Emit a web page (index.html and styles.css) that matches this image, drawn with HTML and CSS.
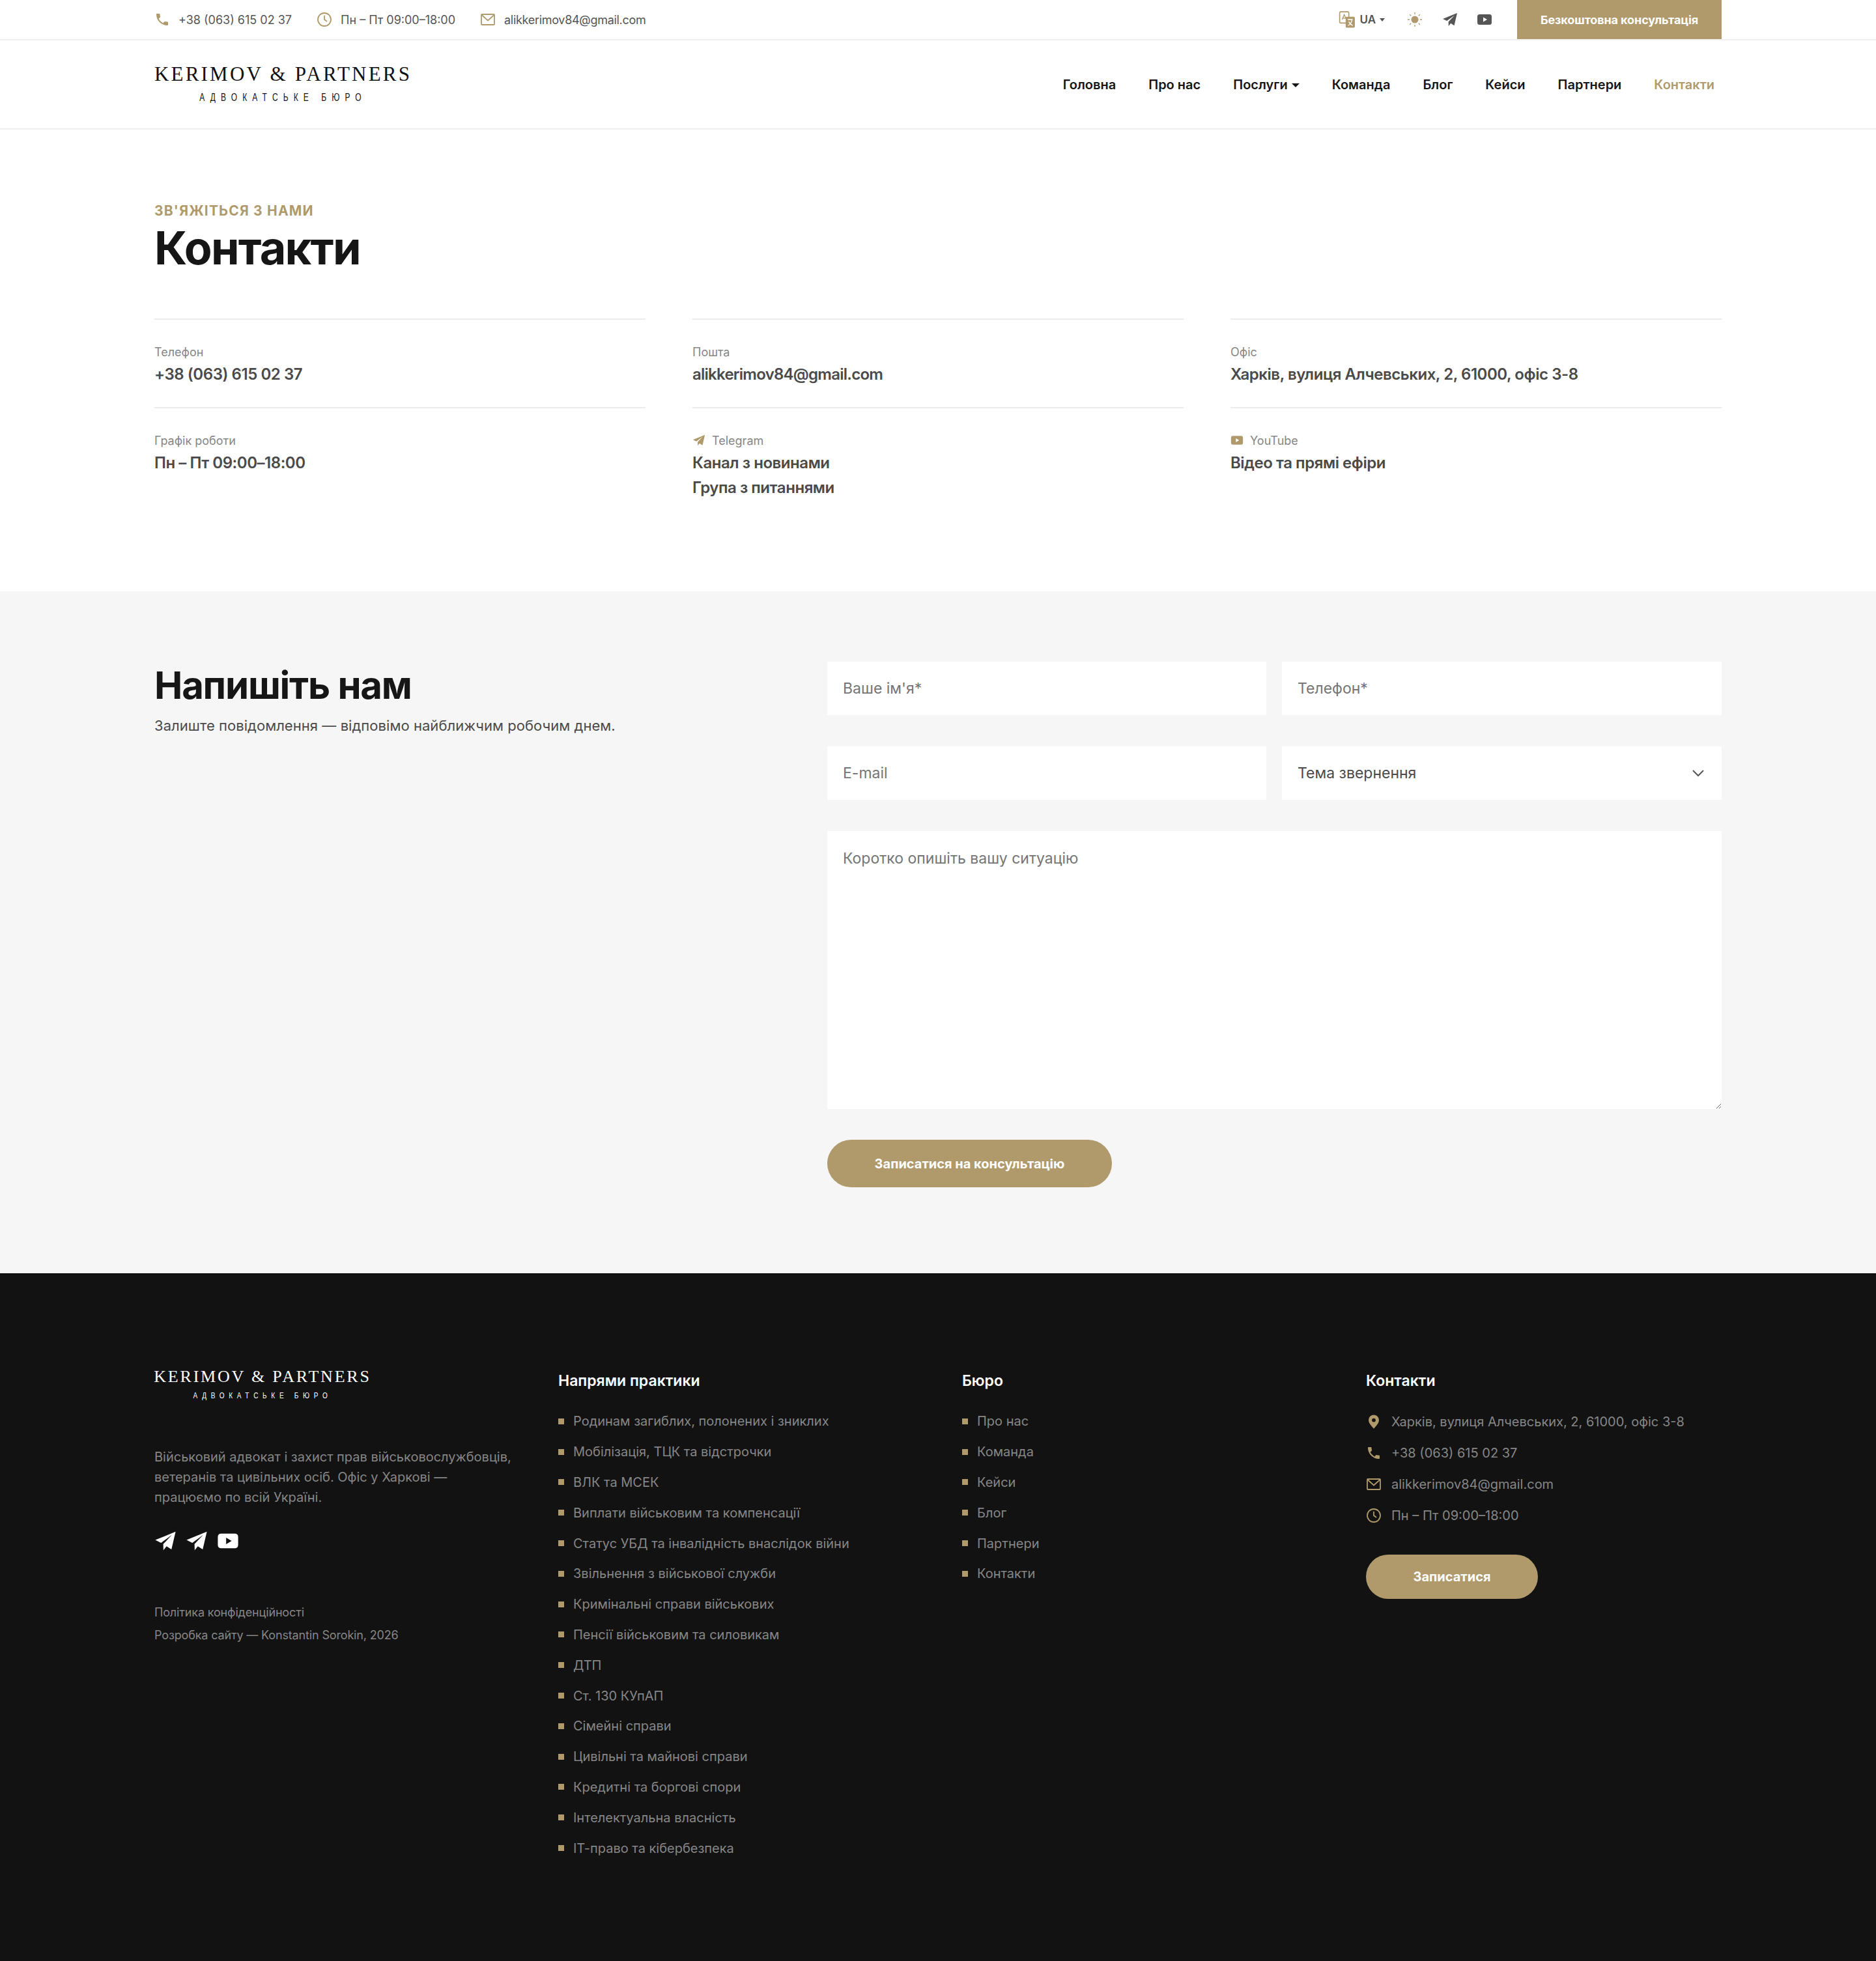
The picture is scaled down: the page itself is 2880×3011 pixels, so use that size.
FILE: index.html
```html
<!DOCTYPE html>
<html lang="uk">
<head>
    <meta charset="UTF-8">
    <title>Контакти — Kerimov &amp; Partners</title>
    <link rel="stylesheet" href="styles.css">
</head>
<body>
    <svg class="sprite" xmlns="http://www.w3.org/2000/svg">
        <symbol id="i-phone" viewBox="0 0 24 24"><path d="M6.62 10.79c1.44 2.83 3.76 5.14 6.59 6.59l2.2-2.2c.27-.27.67-.36 1.02-.24 1.12.37 2.33.57 3.57.57.55 0 1 .45 1 1V20c0 .55-.45 1-1 1-9.39 0-17-7.61-17-17 0-.55.45-1 1-1h3.5c.55 0 1 .45 1 1 0 1.25.2 2.45.57 3.57.11.35.03.74-.25 1.02l-2.2 2.2z" fill="currentColor"/></symbol>
        <symbol id="i-clock" viewBox="0 0 24 24"><g fill="none" stroke="currentColor" stroke-width="1.8" stroke-linecap="round"><circle cx="12" cy="12" r="10"/><path d="M12 6.5V12l3.5 2.5"/></g></symbol>
        <symbol id="i-mail" viewBox="0 0 24 24"><g fill="none" stroke="currentColor" stroke-width="1.8"><rect x="2" y="4" width="20" height="16" rx="1"/><path d="M2.5 5 12 13.5 21.5 5"/></g></symbol>
        <symbol id="i-pin" viewBox="0 0 24 24"><path fill-rule="evenodd" d="M12 1.5a8 8 0 0 0-8 8c0 5.6 8 13 8 13s8-7.4 8-13a8 8 0 0 0-8-8zm0 5.2a2.9 2.9 0 1 1 0 5.8 2.9 2.9 0 0 1 0-5.8z" fill="currentColor"/></symbol>
        <symbol id="i-plane" viewBox="0 0 24 24"><path d="M23 2 1 11l6.2 3.1L19 5.5 9.6 15.4 9.8 22l3.4-4.2 5.3 3.4z" fill="currentColor"/></symbol>
        <symbol id="i-yt" viewBox="0 0 24 24"><path fill-rule="evenodd" d="M4.5 4h15A3.5 3.5 0 0 1 23 7.5v9a3.5 3.5 0 0 1-3.5 3.5h-15A3.5 3.5 0 0 1 1 16.500v-9A3.500 3.500 0 0 1 4.500 4zM10 8.500v7l6-3.500z" fill="currentColor"/></symbol>
        <symbol id="i-sun" viewBox="0 0 24 24"><circle cx="12" cy="12" r="5.500" fill="currentColor"/><path d="M12 1v3M12 20v3M1 12h3M20 12h3M4.200 4.200l2 2M17.800 17.800l2 2M4.200 19.800l2-2M17.800 6.200l2-2" stroke="currentColor" stroke-width="1.300" fill="none"/></symbol>
        <symbol id="i-lang" viewBox="0 0 24 24"><rect x="1.500" y="1" width="13" height="16" rx="1.500" fill="#fff" stroke="currentColor" stroke-width="1.500"/><rect x="10" y="8" width="13" height="15.500" rx="1.500" fill="currentColor"/><path d="M5 12 8 5l3 7M6 10h4" fill="none" stroke="currentColor" stroke-width="1.200"/><path d="M13 12h7M16.500 11v1.500M19 12.500c-.7 4-3 6.500-5.500 8M14.500 15c1 2.500 3 4.500 5.500 5.500" fill="none" stroke="#fff" stroke-width="1.200"/></symbol>
    </svg>

    <header class="site-header">
        <div class="topbar">
            <div class="wrap topbar-inner">
                <div class="top-contacts">
                    <span class="top-item"><svg class="icon gold"><use href="#i-phone"/></svg>+38 (063) 615 02 37</span>
                    <span class="top-item"><svg class="icon gold"><use href="#i-clock"/></svg>Пн – Пт 09:00–18:00</span>
                    <span class="top-item email"><svg class="icon gold"><use href="#i-mail"/></svg>alikkerimov84@gmail.com</span>
                </div>
                <div class="top-actions">
                    <span class="lang"><svg class="icon gold lang-icon"><use href="#i-lang"/></svg>UA<i class="caret"></i></span>
                    <svg class="icon gold sun"><use href="#i-sun"/></svg>
                    <svg class="icon grey plane"><use href="#i-plane"/></svg>
                    <svg class="icon grey yt"><use href="#i-yt"/></svg>
                    <a class="top-cta" href="#">Безкоштовна консультація</a>
                </div>
            </div>
        </div>
        <div class="wrap navbar">
            <a class="logo" href="#">
                <span class="logo-name">KERIMOV &amp; PARTNERS</span>
                <span class="logo-sub">АДВОКАТСЬКЕ БЮРО</span>
            </a>
            <nav class="main-nav">
                <a href="#">Головна</a>
                <a href="#">Про нас</a>
                <a href="#">Послуги<i class="caret"></i></a>
                <a href="#">Команда</a>
                <a href="#">Блог</a>
                <a href="#">Кейси</a>
                <a href="#">Партнери</a>
                <a href="#" class="active">Контакти</a>
            </nav>
        </div>
    </header>

    <section class="contacts">
        <div class="wrap">
            <p class="eyebrow">ЗВ'ЯЖІТЬСЯ З НАМИ</p>
            <h1>Контакти</h1>
            <div class="contact-grid">
                <div class="contact-cell">
                    <div class="cell-label">Телефон</div>
                    <div class="cell-value">+38 (063) 615 02 37</div>
                </div>
                <div class="contact-cell">
                    <div class="cell-label">Пошта</div>
                    <div class="cell-value email">alikkerimov84@gmail.com</div>
                </div>
                <div class="contact-cell">
                    <div class="cell-label">Офіс</div>
                    <div class="cell-value">Харків, вулиця Алчевських, 2, 61000, офіс 3-8</div>
                </div>
                <div class="contact-cell">
                    <div class="cell-label">Графік роботи</div>
                    <div class="cell-value">Пн – Пт 09:00–18:00</div>
                </div>
                <div class="contact-cell">
                    <div class="cell-label"><svg class="icon gold"><use href="#i-plane"/></svg>Telegram</div>
                    <div class="cell-value">Канал з новинами</div>
                    <div class="cell-value">Група з питаннями</div>
                </div>
                <div class="contact-cell">
                    <div class="cell-label"><svg class="icon gold"><use href="#i-yt"/></svg>YouTube</div>
                    <div class="cell-value">Відео та прямі ефіри</div>
                </div>
            </div>
        </div>
    </section>

    <section class="write-us">
        <div class="wrap write-inner">
            <div class="write-intro">
                <h2>Напишіть нам</h2>
                <p>Залиште повідомлення — відповімо найближчим робочим днем.</p>
            </div>
            <form class="contact-form">
                <input type="text" placeholder="Ваше ім'я*">
                <input type="text" placeholder="Телефон*">
                <input type="text" placeholder="E-mail">
                <div class="select-field">Тема звернення
                    <svg class="chevron" viewBox="0 0 20 12"><path d="M2 2l8 8 8-8" fill="none" stroke="currentColor" stroke-width="2"/></svg>
                </div>
                <textarea placeholder="Коротко опишіть вашу ситуацію"></textarea>
                <button type="button" class="form-submit">Записатися на консультацію</button>
            </form>
        </div>
    </section>

    <footer class="site-footer">
        <div class="wrap footer-grid">
            <div class="footer-about">
                <a class="logo logo-footer" href="#">
                    <span class="logo-name">KERIMOV &amp; PARTNERS</span>
                    <span class="logo-sub">АДВОКАТСЬКЕ БЮРО</span>
                </a>
                <p class="about-text">Військовий адвокат і захист прав військовослужбовців, ветеранів та цивільних осіб. Офіс у Харкові — працюємо по всій Україні.</p>
                <div class="footer-social">
                    <svg class="icon"><use href="#i-plane"/></svg>
                    <svg class="icon"><use href="#i-plane"/></svg>
                    <svg class="icon"><use href="#i-yt"/></svg>
                </div>
                <div class="footer-legal">
                    <a href="#">Політика конфіденційності</a>
                    <a href="#">Розробка сайту — Konstantin Sorokin, 2026</a>
                </div>
            </div>
            <div class="footer-col">
                <h3>Напрями практики</h3>
                <ul>
                    <li>Родинам загиблих, полонених і зниклих</li>
                    <li>Мобілізація, ТЦК та відстрочки</li>
                    <li>ВЛК та МСЕК</li>
                    <li>Виплати військовим та компенсації</li>
                    <li>Статус УБД та інвалідність внаслідок війни</li>
                    <li>Звільнення з військової служби</li>
                    <li>Кримінальні справи військових</li>
                    <li>Пенсії військовим та силовикам</li>
                    <li>ДТП</li>
                    <li>Ст. 130 КУпАП</li>
                    <li>Сімейні справи</li>
                    <li>Цивільні та майнові справи</li>
                    <li>Кредитні та боргові спори</li>
                    <li>Інтелектуальна власність</li>
                    <li>ІТ-право та кібербезпека</li>
                </ul>
            </div>
            <div class="footer-col">
                <h3>Бюро</h3>
                <ul>
                    <li>Про нас</li>
                    <li>Команда</li>
                    <li>Кейси</li>
                    <li>Блог</li>
                    <li>Партнери</li>
                    <li>Контакти</li>
                </ul>
            </div>
            <div class="footer-col">
                <h3>Контакти</h3>
                <div class="footer-contact"><svg class="icon gold"><use href="#i-pin"/></svg>Харків, вулиця Алчевських, 2, 61000, офіс 3-8</div>
                <div class="footer-contact"><svg class="icon gold"><use href="#i-phone"/></svg>+38 (063) 615 02 37</div>
                <div class="footer-contact"><svg class="icon gold"><use href="#i-mail"/></svg>alikkerimov84@gmail.com</div>
                <div class="footer-contact"><svg class="icon gold"><use href="#i-clock"/></svg>Пн – Пт 09:00–18:00</div>
                <a class="footer-btn" href="#">Записатися</a>
            </div>
        </div>
    </footer>
</body>
</html>
```
FILE: styles.css
```css
:root {
    --gold: #b09a6c;
    --dark: #121212;
    --heading: #161616;
    --text: #4a4a4a;
    --muted: #868686;
    --line: #ececec;
}

* {
    margin: 0;
    padding: 0;
    box-sizing: border-box;
}

body {
    font-family: Inter, 'Liberation Sans', sans-serif;
    color: var(--text);
    background: #fff;
}

a {
    color: inherit;
    text-decoration: none;
}

.sprite {
    display: none;
}

.wrap {
    width: 2406px;
    margin: 0 auto;
}

.icon {
    display: block;
    flex-shrink: 0;
    width: 24px;
    height: 24px;
}

.gold {
    color: var(--gold);
}

.grey {
    color: #555;
}

.caret {
    display: inline-block;
    width: 0;
    height: 0;
    margin-left: 6px;
    border-left: 6px solid transparent;
    border-right: 6px solid transparent;
    border-top: 6px solid currentColor;
    vertical-align: 3px;
}

/* header */
.site-header {
    border-bottom: 2px solid #f0f0f0;
}

.topbar {
    border-bottom: 2px solid #f0f0f0;
    height: 62px;
}

.topbar-inner {
    display: flex;
    justify-content: space-between;
    height: 60px;
}

.top-contacts {
    display: flex;
    align-items: center;
    gap: 38px;
    font-size: 18px;
    color: #555;
}

.top-item {
    display: flex;
    align-items: center;
    gap: 13px;
}

.top-item.email {
    letter-spacing: -0.3px;
}

.top-actions {
    display: flex;
    align-items: center;
}

.lang {
    display: flex;
    align-items: center;
    gap: 6px;
    font-size: 17px;
    font-weight: 600;
    color: #555;
}

.lang-icon {
    width: 26px;
    height: 26px;
}

.lang .caret {
    margin-left: 0;
    border-left-width: 4px;
    border-right-width: 4px;
    border-top-width: 5px;
    vertical-align: 0;
}

.sun {
    margin-left: 34px;
}

.plane {
    margin-left: 30px;
}

.yt {
    margin-left: 29px;
}

.top-cta {
    display: flex;
    align-items: center;
    justify-content: center;
    width: 314px;
    height: 60px;
    margin-left: 38px;
    background: var(--gold);
    color: #fff;
    font-size: 18px;
    font-weight: 700;
    letter-spacing: -0.1px;
}

.navbar {
    display: flex;
    align-items: center;
    justify-content: space-between;
    height: 135px;
}

.logo {
    display: flex;
    flex-direction: column;
    align-items: center;
    color: #111;
    white-space: nowrap;
}

.logo-name {
    font-family: 'Liberation Serif', serif;
    font-size: 31px;
    letter-spacing: 3.2px;
    line-height: 36px;
    margin-top: -5px;
}

.logo-sub {
    margin-top: 10px;
    font-family: 'Liberation Sans', sans-serif;
    font-size: 12px;
    letter-spacing: 8.1px;
    line-height: 16px;
    transform: scaleY(1.33);
}

.main-nav {
    display: flex;
    align-items: center;
    gap: 50px;
    padding-right: 11px;
    font-size: 20px;
    font-weight: 600;
    color: var(--heading);
}

.main-nav .active {
    color: var(--gold);
}

/* contacts block */
.contacts {
    height: 709px;
    padding-top: 111px;
}

.eyebrow {
    font-size: 21px;
    font-weight: 700;
    letter-spacing: 1.2px;
    line-height: 28px;
    color: var(--gold);
}

h1 {
    margin-top: 1px;
    font-size: 70px;
    font-weight: 700;
    line-height: 84px;
    letter-spacing: -1.8px;
    color: var(--heading);
}

.contact-grid {
    display: grid;
    grid-template-columns: repeat(3, 754px);
    column-gap: 72px;
    margin-top: 66px;
}

.contact-cell {
    height: 136px;
    padding-top: 37px;
    border-top: 2px solid var(--line);
}

.cell-label {
    display: flex;
    align-items: center;
    gap: 10px;
    height: 24px;
    font-size: 18px;
    color: var(--muted);
}

.cell-label .icon {
    width: 20px;
    height: 20px;
}

.cell-value {
    margin-top: 7px;
    font-size: 24px;
    font-weight: 600;
    line-height: 32px;
    letter-spacing: -0.45px;
}

.cell-value.email {
    letter-spacing: -0.75px;
}

.cell-value + .cell-value {
    margin-top: 6px;
}

/* form block */
.write-us {
    height: 1047px;
    padding-top: 108px;
    background: #f6f6f6;
}

.write-inner {
    display: flex;
    justify-content: space-between;
}

.write-intro h2 {
    font-size: 58px;
    font-weight: 700;
    line-height: 72px;
    letter-spacing: -1.2px;
    color: var(--heading);
}

.write-intro p {
    margin-top: 10px;
    font-size: 22px;
    line-height: 32px;
    letter-spacing: 0.05px;
}

.contact-form {
    display: grid;
    grid-template-columns: 674px 675px;
    gap: 48px 24px;
    width: 1373px;
    align-content: start;
}

.contact-form input,
.contact-form textarea,
.select-field {
    width: 100%;
    height: 82px;
    padding: 0 24px;
    border: none;
    border-radius: 0;
    outline: none;
    background: #fff;
    font-family: inherit;
    font-size: 23px;
    color: var(--text);
}

.contact-form input::placeholder,
.contact-form textarea::placeholder {
    color: #757575;
    opacity: 1;
}

.select-field {
    display: flex;
    align-items: center;
    justify-content: space-between;
}

.chevron {
    width: 20px;
    height: 12px;
    margin-right: 2px;
    color: #555;
}

.contact-form textarea {
    grid-column: 1 / -1;
    height: 427px;
    padding-top: 28px;
    line-height: 28px;
}

.form-submit {
    width: 437px;
    height: 73px;
    border: none;
    border-radius: 37px;
    background: var(--gold);
    color: #fff;
    font-family: inherit;
    font-size: 20px;
    font-weight: 700;
    margin-top: -1px;
}

/* footer */
.site-footer {
    height: 1056px;
    padding-top: 144px;
    background: var(--dark);
    color: var(--muted);
}

.footer-grid {
    display: grid;
    grid-template-columns: repeat(4, 620px);
    width: 2406px;
    justify-content: start;
}

.logo-footer {
    align-items: center;
    width: 332px;
    color: #fff;
}

.logo-footer .logo-name {
    margin-top: 0;
    font-size: 26px;
    letter-spacing: 2.8px;
    line-height: 30px;
}

.logo-footer .logo-sub {
    margin-top: 7px;
    font-size: 10px;
    letter-spacing: 6.7px;
    line-height: 14px;
}

.about-text {
    width: 550px;
    margin-top: 72px;
    font-size: 20px;
    line-height: 31px;
}

.footer-social {
    display: flex;
    gap: 14px;
    margin-top: 34px;
    color: #fff;
}

.footer-social .icon {
    width: 34px;
    height: 34px;
}

.footer-legal {
    display: flex;
    flex-direction: column;
    gap: 10px;
    margin-top: 80px;
    font-size: 18px;
    line-height: 25px;
    letter-spacing: -0.15px;
}

.footer-col h3 {
    margin-top: 5px;
    margin-bottom: 23px;
    font-size: 23px;
    font-weight: 600;
    line-height: 32px;
    color: #fff;
}

.footer-col ul {
    list-style: none;
}

.footer-col li {
    display: flex;
    align-items: center;
    gap: 14px;
    height: 46.8px;
    font-size: 20px;
}

.footer-col li::before {
    content: "";
    width: 9px;
    height: 9px;
    background: var(--gold);
}

.footer-contact {
    display: flex;
    align-items: center;
    gap: 15px;
    height: 48px;
    font-size: 20px;
}

.footer-contact .icon {
    width: 24px;
    height: 24px;
}

.footer-btn {
    display: flex;
    align-items: center;
    justify-content: center;
    width: 264px;
    height: 68px;
    margin-top: 36px;
    border-radius: 34px;
    background: var(--gold);
    color: #fff;
    font-size: 20px;
    font-weight: 700;
}
```
